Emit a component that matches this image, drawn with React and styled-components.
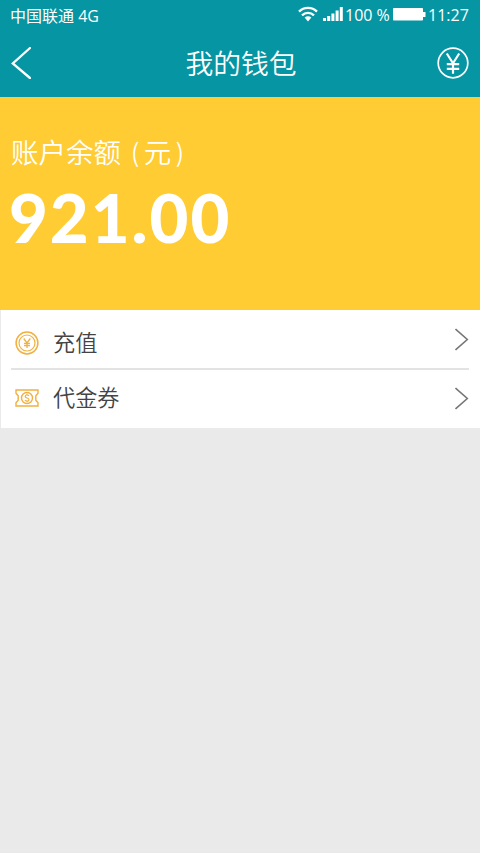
import React from 'react';
import styled, { createGlobalStyle } from 'styled-components';

const GlobalStyle = createGlobalStyle`
  * {
    box-sizing: border-box;
  }

  body {
    margin: 0;
    background-color: #eaeaea;
    font-family: 'Open Sans', 'Noto Sans CJK SC', sans-serif;
  }

  svg {
    display: block;
    flex-shrink: 0;
  }
`;

const Page = styled.div`
  display: flex;
  flex-direction: column;
  width: 480px;
  height: 853px;
  overflow: hidden;
  background-color: #eaeaea;
`;

const Header = styled.header`
  height: 97px;
  background-color: #0595a3;
  color: #ffffff;
`;

const StatusBar = styled.div`
  display: flex;
  align-items: center;
  justify-content: space-between;
  height: 30px;
  padding: 0 11px 0 10px;
  font-size: 16px;
  line-height: 30px;
  white-space: pre;
`;

const Carrier = styled.span`
  padding-top: 1px;
`;

const StatusGroup = styled.div`
  display: flex;
  align-items: center;
`;

const Signal = styled.div`
  display: flex;
  align-items: center;
  gap: 5px;
  padding-bottom: 2px;
`;

const Percent = styled.span`
  width: 46px;
  margin: 0 2px;
`;

const Clock = styled.span`
  width: 41px;
  margin-left: 2px;
`;

const NavBar = styled.nav`
  display: grid;
  grid-template-columns: 60px 1fr 60px;
  align-items: center;
  height: 67px;
`;

const NavButton = styled.button`
  display: flex;
  justify-content: ${({ $end }) => ($end ? 'flex-end' : 'flex-start')};
  padding: 0 11px 1px;
  border: none;
  background: none;
  color: inherit;
  cursor: pointer;
`;

const Title = styled.h1`
  margin: 0;
  padding: 0 0 1px 2px;
  font-size: 27.8px;
  font-weight: 350;
  line-height: 40px;
  text-align: center;
`;

const Balance = styled.section`
  height: 213px;
  padding: 36px 9px 0;
  background-color: #ffcc33;
  color: #ffffff;
`;

const BalanceLabel = styled.p`
  display: flex;
  margin: 0;
  padding-left: 2px;
  font-family: 'Noto Sans CJK SC', sans-serif;
  font-size: 27.5px;
  font-weight: 350;
  line-height: 36px;
`;

const Unit = styled.span`
  display: flex;
  gap: 4.5px;
  margin-left: 10px;
`;

const Paren = styled.span`
  font-size: 25px;
`;

const Amount = styled.p`
  margin: 8px 0 0;
  font-family: Lato, sans-serif;
  font-size: 67px;
  font-weight: 900;
  line-height: 80px;
  letter-spacing: 2px;
`;

const List = styled.ul`
  margin: 0 0 0 1px;
  padding: 0 11px 0 10px;
  list-style: none;
  background-color: #ffffff;
`;

const Item = styled.li`
  display: flex;
  align-items: center;
  height: ${({ $last }) => ($last ? '58px' : '60px')};
  padding: ${({ $last }) => ($last ? '0 0 2px 4px' : '7px 0 0 4px')};
  border-bottom: ${({ $last }) => ($last ? 'none' : '2px solid #e3e3e4')};
  color: #444444;
`;

const ItemLabel = styled.span`
  flex: 1;
  margin-left: 14px;
  font-size: 22.2px;
  font-weight: 350;
  line-height: 32px;
`;

const Arrow = styled.svg`
  margin-top: ${({ $lift }) => ($lift ? '-6px' : '0')};
`;

const WifiIcon = () => (
  <svg width="20" height="16" viewBox="0 0 20 16" fill="none" stroke="#fff" strokeWidth="2.3">
    <path d="M1 5.6C6 .7 14 .7 19 5.6" />
    <path d="M4 9.3c3.4-3.3 8.6-3.3 12 0" />
    <path d="M6.6 11.4c2-1.6 4.8-1.6 6.8 0L10 15.4z" fill="#fff" stroke="none" />
  </svg>
);

const SignalIcon = () => (
  <svg width="20" height="14" viewBox="0 0 20 14" fill="#fff">
    <rect x="0" y="11" width="3" height="3" />
    <rect x="4.2" y="9" width="3" height="5" />
    <rect x="8.4" y="6.5" width="3" height="7.5" />
    <rect x="12.6" y="3.5" width="3" height="10.5" />
    <rect x="16.8" y="0" width="3" height="14" />
  </svg>
);

const BatteryIcon = () => (
  <svg width="33" height="14" viewBox="0 0 33 14" fill="#fff">
    <rect width="30" height="12.6" rx="0.8" />
    <rect x="30" y="4" width="2.5" height="5" />
  </svg>
);

const BackIcon = () => (
  <svg width="20" height="32" viewBox="0 0 20 32" fill="none" stroke="#fff" strokeWidth="2.3">
    <path d="M19 1L1.8 16.5L19 31" strokeLinecap="round" />
  </svg>
);

const YenIcon = () => (
  <svg width="32" height="32" viewBox="0 0 32 32" fill="none" stroke="#fff">
    <circle cx="16" cy="16" r="14.8" strokeWidth="1.7" />
    <path d="M9.8 6.5L16 16.3L22.2 6.5M16 16v10.7M9.8 17.2h12.4M9.8 21.8h12.4" strokeWidth="2.2" />
  </svg>
);

const CoinIcon = () => (
  <svg width="24" height="24" viewBox="0 0 24 24" fill="none" stroke="#f1b040">
    <circle cx="12" cy="12" r="10.9" strokeWidth="1.5" />
    <circle cx="12" cy="12" r="8" strokeWidth="1.2" />
    <path d="M8.7 7.5L12 12l3.3-4.5M12 12v5M9 12.3h6M9 14.5h6" strokeWidth="1.3" />
  </svg>
);

const VoucherIcon = () => (
  <svg width="24" height="18" viewBox="0 0 24 18" fill="none" stroke="#f1b040" strokeWidth="1.4">
    <path d="M1 1h22v3.2l-2.2 2.6v4.4l2.2 2.6V17H1v-3.2l2.2-2.6V6.8L1 4.2z" />
    <circle cx="12" cy="9" r="5.5" />
    <path d="M14 7c-.8-1.5-3.8-1.3-3.8.4 0 1.8 3.8 1.4 3.8 3.3 0 1.7-3.2 1.8-4 .2M12 4.8v1.4M12 11.8v1.5" strokeWidth="1.2" />
  </svg>
);

const ChevronIcon = ({ lift }) => (
  <Arrow $lift={lift} width="14" height="23" viewBox="0 0 14 23" fill="none" stroke="#777" strokeWidth="1.6">
    <path d="M0.5 1L12.3 11.5L0.5 22" />
  </Arrow>
);

const App = () => (
  <>
    <GlobalStyle />
    <Page>
      <Header>
        <StatusBar>
          <Carrier>中国联通 4G</Carrier>
          <StatusGroup>
            <Signal>
              <WifiIcon />
              <SignalIcon />
            </Signal>
            <Percent>100 %</Percent>
            <BatteryIcon />
            <Clock>11:27</Clock>
          </StatusGroup>
        </StatusBar>
        <NavBar>
          <NavButton type="button" aria-label="返回">
            <BackIcon />
          </NavButton>
          <Title>我的钱包</Title>
          <NavButton type="button" aria-label="账单" $end>
            <YenIcon />
          </NavButton>
        </NavBar>
      </Header>
      <Balance>
        <BalanceLabel>
          账户余额
          <Unit>
            <Paren>(</Paren>
            <span>元</span>
            <Paren>)</Paren>
          </Unit>
        </BalanceLabel>
        <Amount>921.00</Amount>
      </Balance>
      <List>
        <Item>
          <CoinIcon />
          <ItemLabel>充值</ItemLabel>
          <ChevronIcon lift />
        </Item>
        <Item $last>
          <VoucherIcon />
          <ItemLabel>代金券</ItemLabel>
          <ChevronIcon />
        </Item>
      </List>
    </Page>
  </>
);

export default App;
